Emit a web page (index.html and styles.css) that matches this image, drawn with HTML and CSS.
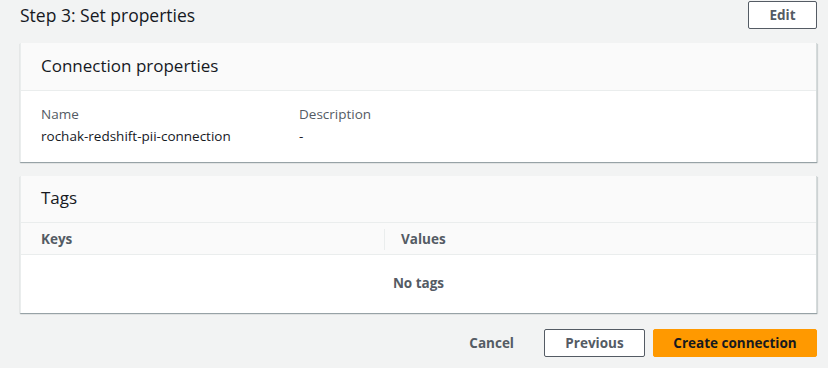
FILE: index.html
```html
<!DOCTYPE html>
<html lang="en">
<head>
  <meta charset="UTF-8">
  <title>Step 3: Set properties</title>
  <link rel="stylesheet" href="styles.css">
</head>
<body>
  <div class="page">
    <div class="step-header">
      <h2 class="step-title">Step 3: Set properties</h2>
      <button class="btn btn-normal btn-edit">Edit</button>
    </div>

    <section class="card">
      <div class="card-header">Connection properties</div>
      <div class="card-body props">
        <div class="prop prop-name">
          <div class="prop-label">Name</div>
          <div class="prop-value">rochak-redshift-pii-connection</div>
        </div>
        <div class="prop">
          <div class="prop-label">Description</div>
          <div class="prop-value">-</div>
        </div>
      </div>
    </section>

    <section class="card">
      <div class="card-header tags-header">Tags</div>
      <table class="tags-table">
        <thead>
          <tr>
            <th class="col-key">Keys</th>
            <th class="col-value"><span class="divider"></span>Values</th>
          </tr>
        </thead>
        <tbody>
          <tr>
            <td colspan="2" class="empty">No tags</td>
          </tr>
        </tbody>
      </table>
    </section>

    <div class="actions">
      <button class="btn btn-link">Cancel</button>
      <button class="btn btn-normal btn-prev">Previous</button>
      <button class="btn btn-primary">Create connection</button>
    </div>
  </div>
</body>
</html>
```

FILE: styles.css
```css
body {
  margin: 0;
  background: #f2f3f3;
  font-family: 'Open Sans', 'Noto Sans', Arial, sans-serif;
  color: #16191f;
}
.page {
  padding: 1px 11px 0 20px;
}
.step-header {
  display: flex;
  align-items: center;
  justify-content: space-between;
  height: 28px;
  margin-bottom: 14px;
}
.step-title {
  margin: 0;
  font-size: 17.5px;
  font-weight: 400;
  line-height: 28px;
}
.btn {
  font-family: inherit;
  font-size: 13.5px;
  font-weight: 700;
  height: 28px;
  border-radius: 2px;
  cursor: pointer;
  padding: 0 18px;
  line-height: 24px;
}
.btn-normal {
  background: #fff;
  border: 1px solid #545b64;
  color: #545b64;
}
.btn-edit {
  width: 69px;
  padding: 0;
}
.btn-prev {
  width: 101px;
  padding: 0;
}
.btn-link {
  background: transparent;
  border: 1px solid transparent;
  color: #545b64;
  padding: 0 21px;
}
.btn-primary {
  background: #ff9900;
  border: 1px solid #ff9900;
  color: #16191f;
  width: 164px;
  padding: 0;
}
.card {
  background: #fff;
  border-left: 1px solid #eaeded;
  border-right: 1px solid #d5dbdb;
  box-shadow: 0 1px 1px 0 rgba(0,28,36,0.3), 1px 1px 1px 0 rgba(0,28,36,0.1);
  margin-bottom: 14px;
}
.card-header {
  background: #fafafa;
  border-bottom: 1px solid #eaeded;
  height: 47px;
  line-height: 46px;
  padding: 0 20px;
  font-size: 17px;
}
.tags-header {
  height: 46px;
  line-height: 44px;
}
.props {
  display: flex;
  padding: 12px 20px 15px 20px;
  font-size: 13.5px;
  line-height: 22px;
}
.prop-name {
  width: 258px;
}
.prop-label {
  color: #545b64;
}
.tags-table {
  width: 100%;
  border-collapse: collapse;
  font-size: 13.5px;
}
.tags-table th {
  background: #fafafa;
  color: #545b64;
  font-weight: 700;
  font-size: 13.5px;
  text-align: left;
  height: 31px;
  padding: 0 0 0 20px;
  border-bottom: 1px solid #eaeded;
}
.tags-table .col-key {
  width: 343px;
}
.tags-table .col-value {
  position: relative;
  padding-left: 17px;
}
.divider {
  position: absolute;
  left: 0;
  top: 6px;
  bottom: 4px;
  border-left: 1px solid #eaeded;
}
.empty {
  height: 53px;
  padding-bottom: 4px;
  text-align: center;
  color: #545b64;
  font-weight: 700;
  font-size: 13.5px;
}
.actions {
  display: flex;
  justify-content: flex-end;
  gap: 8px;
  margin-top: 16px;
}
```
